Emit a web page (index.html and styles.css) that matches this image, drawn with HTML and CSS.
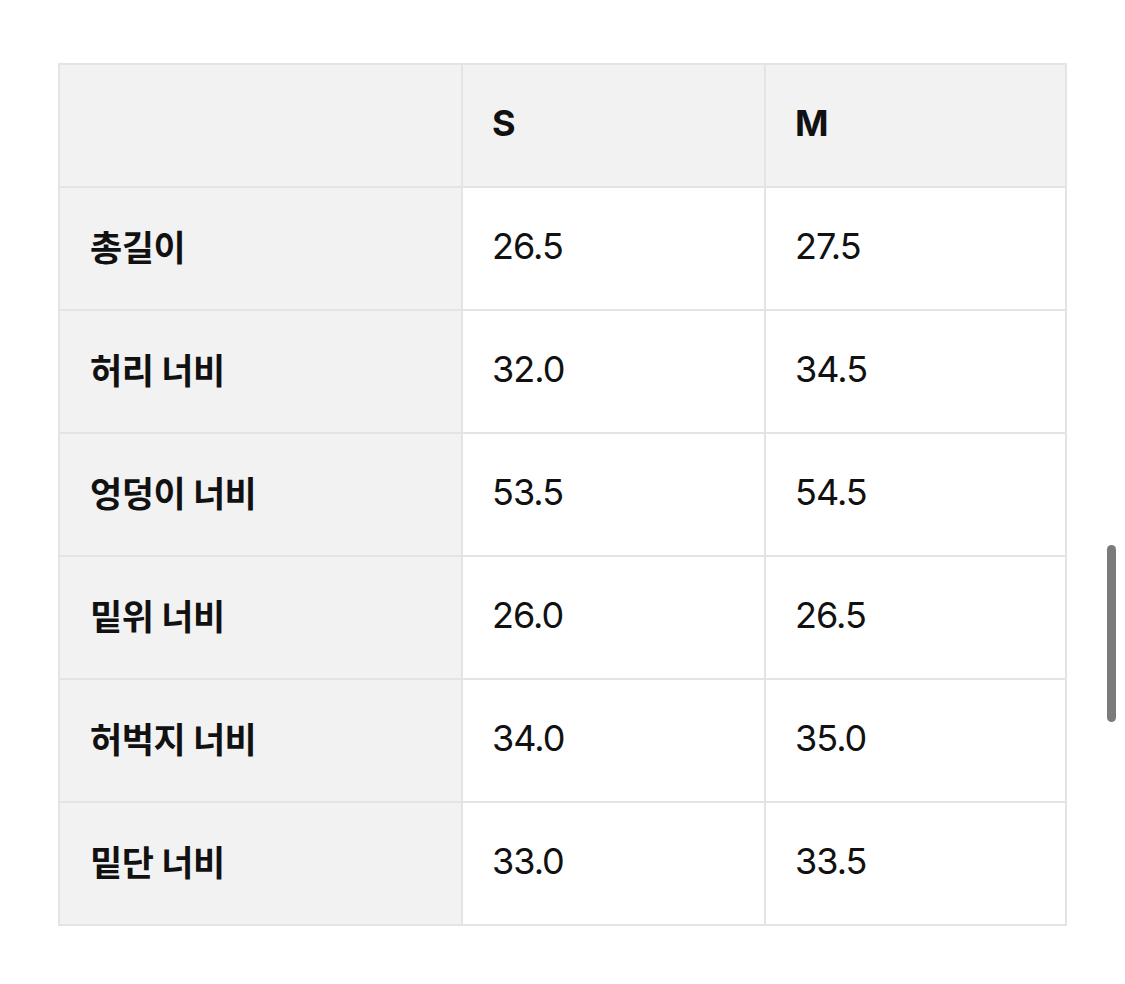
FILE: index.html
```html
<!DOCTYPE html>
<html lang="ko">
<head>
<meta charset="utf-8">
<link rel="stylesheet" href="styles.css">
</head>
<body>
<div class="page">
  <table class="size-table">
    <colgroup>
      <col class="c-label">
      <col class="c-val">
      <col class="c-val2">
    </colgroup>
    <thead>
      <tr><th class="label"></th><th>S</th><th>M</th></tr>
    </thead>
    <tbody>
      <tr><th class="label">총길이</th><td>26.5</td><td>27.5</td></tr>
      <tr><th class="label">허리 너비</th><td>32.0</td><td>34.5</td></tr>
      <tr><th class="label">엉덩이 너비</th><td>53.5</td><td>54.5</td></tr>
      <tr><th class="label">밑위 너비</th><td>26.0</td><td>26.5</td></tr>
      <tr><th class="label">허벅지 너비</th><td>34.0</td><td>35.0</td></tr>
      <tr><th class="label">밑단 너비</th><td>33.0</td><td>33.5</td></tr>
    </tbody>
  </table>
  <div class="scrollbar"></div>
</div>
</body>
</html>
```
FILE: styles.css
```css
html, body {
  margin: 0;
  padding: 0;
  background: #ffffff;
}
body {
  font-family: "Inter", "Noto Sans CJK KR", sans-serif;
  color: #111111;
}
.page {
  position: relative;
  width: 1125px;
  height: 984px;
  padding: 63px 0 0 58px;
  box-sizing: border-box;
}
.size-table {
  border-collapse: collapse;
  width: 1007px;
  table-layout: fixed;
}
.c-label { width: 403px; }
.c-val { width: 303px; }
.c-val2 { width: 301px; }
.size-table th,
.size-table td {
  height: 123px;
  border: 2px solid #e4e4e4;
  padding: 0 0 6px 30px;
  text-align: left;
  vertical-align: middle;
  box-sizing: border-box;
}
.size-table thead th {
  background: #f2f2f2;
  font-weight: 700;
  font-size: 36px;
  padding-left: 29px;
}
.size-table th.label {
  background: #f2f2f2;
  font-weight: 700;
  font-size: 35px;
  letter-spacing: -0.5px;
  padding-left: 30px;
}
.size-table td {
  font-size: 36px;
  font-weight: 400;
  letter-spacing: -1px;
  padding-left: 29px;
}
.scrollbar {
  position: absolute;
  left: 1107px;
  top: 545px;
  width: 9px;
  height: 177px;
  border-radius: 5px;
  background: #7b7b7b;
}
```
